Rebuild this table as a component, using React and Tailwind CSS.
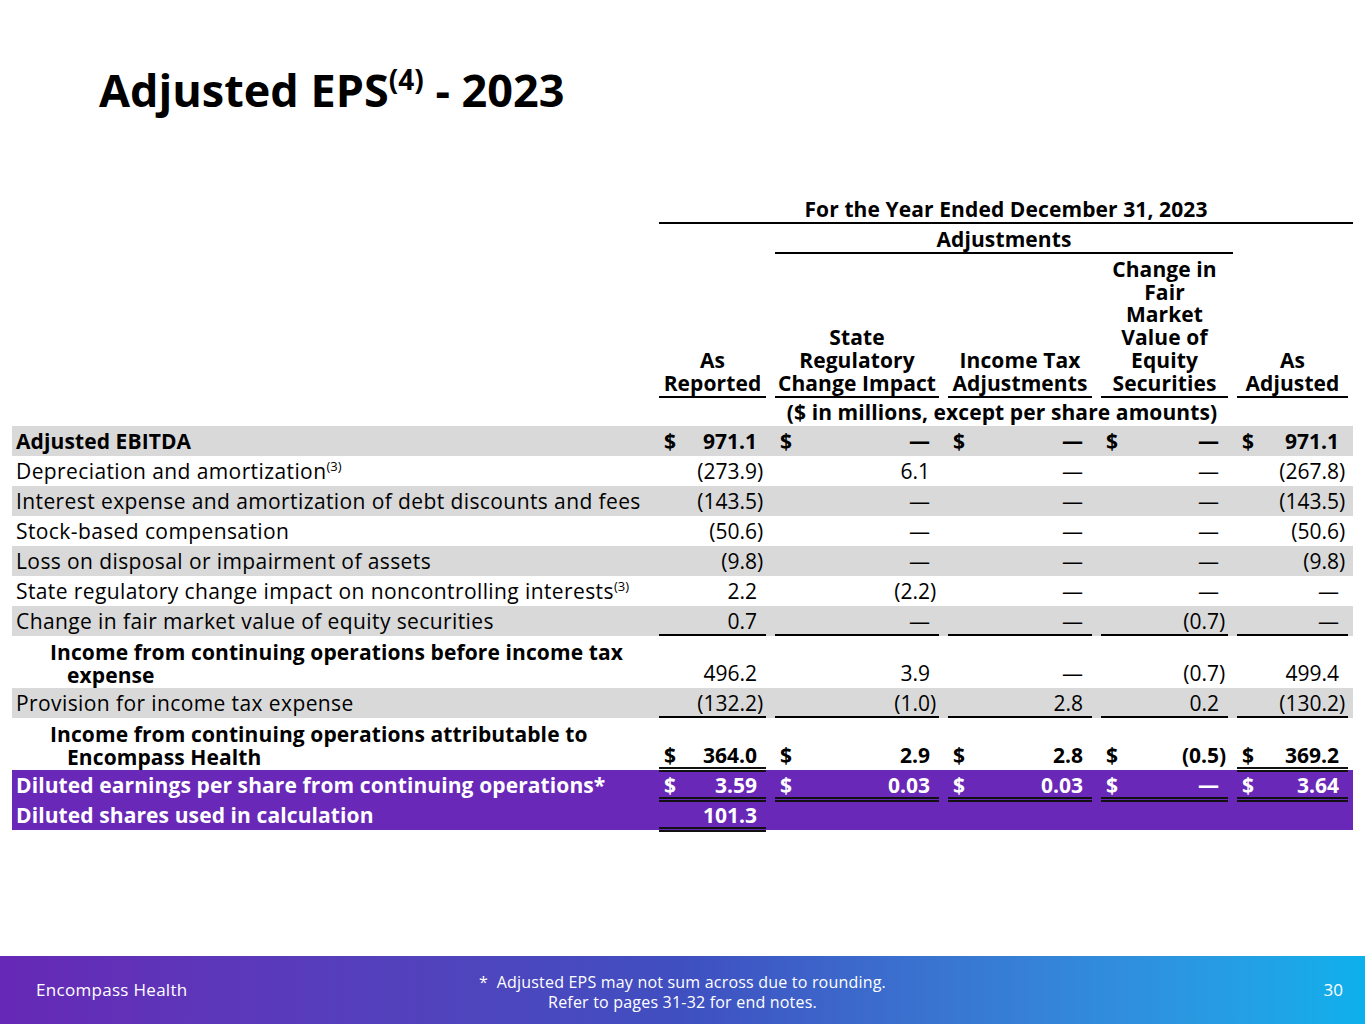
import React from 'react';

const FONT = "font-['Open_Sans','Noto_Sans',sans-serif]";
const GRID = 'grid w-[1341px] grid-cols-[643px_116px_173px_153px_136px_120px]';

// underline bars drawn under the figure cells
const LINES = {
  single: 'bottom-0 h-[2px] bg-black',
  double: 'bottom-[-2px] h-[5px] border-y-2 border-[#111]',
};

const rows = [
  { label: 'Adjusted EBITDA', bold: true, bg: 'gray', cells: ['$ 971.1', '$ —', '$ —', '$ —', '$ 971.1'] },
  { label: 'Depreciation and amortization', sup: '(3)', cells: ['(273.9)', '6.1', '—', '—', '(267.8)'] },
  { label: 'Interest expense and amortization of debt discounts and fees', bg: 'gray', cells: ['(143.5)', '—', '—', '—', '(143.5)'] },
  { label: 'Stock-based compensation', cells: ['(50.6)', '—', '—', '—', '(50.6)'] },
  { label: 'Loss on disposal or impairment of assets', bg: 'gray', cells: ['(9.8)', '—', '—', '—', '(9.8)'] },
  { label: 'State regulatory change impact on noncontrolling interests', sup: '(3)', cells: ['2.2', '(2.2)', '—', '—', '—'] },
  { label: 'Change in fair market value of equity securities', bg: 'gray', cells: ['0.7', '—', '—', '(0.7)', '—'], lines: ['single', 'single', 'single', 'single', 'single'] },
  { label: ['Income from continuing operations before income tax', 'expense'], cells: ['496.2', '3.9', '—', '(0.7)', '499.4'] },
  { label: 'Provision for income tax expense', bg: 'gray', cells: ['(132.2)', '(1.0)', '2.8', '0.2', '(130.2)'], lines: ['single', 'single', 'single', 'single', 'single'] },
  { label: ['Income from continuing operations attributable to', 'Encompass Health'], boldVals: true, cells: ['$ 364.0', '$ 2.9', '$ 2.8', '$ (0.5)', '$ 369.2'], lines: ['double', 'none', 'none', 'none', 'double'] },
  { label: 'Diluted earnings per share from continuing operations*', bold: true, bg: 'purple', cells: ['$ 3.59', '$ 0.03', '$ 0.03', '$ —', '$ 3.64'], lines: ['double', 'double', 'double', 'double', 'double'] },
  { label: 'Diluted shares used in calculation', bold: true, bg: 'purple', cells: ['101.3', '', '', '', ''], lines: ['double', 'none', 'none', 'none', 'none'] },
];

const BG = { gray: 'bg-[#d9d9d9] text-black', purple: 'bg-[#6a28b8] text-white', white: 'bg-white text-black' };

function Cell({ text, line = 'none' }) {
  let dollar = '';
  let v = text;
  if (v.startsWith('$')) {
    dollar = '$';
    v = v.slice(1).trim();
  }
  const paren = v.endsWith(')');
  if (paren) v = v.slice(0, -1);
  return (
    <div className="relative h-[30px] flex items-center justify-between pl-[9px] pr-[5px] leading-[30px]">
      <span>{dollar}</span>
      <span className="flex">
        <span>{v}</span>
        <span className="w-[9px]">{paren ? ')' : ''}</span>
      </span>
      {line !== 'none' && <div className={`absolute left-[4px] right-[5px] ${LINES[line]}`} />}
    </div>
  );
}

function Row({ r }) {
  const two = Array.isArray(r.label);
  const bold = r.bold || r.boldVals;
  return (
    <div className={`${GRID} ${BG[r.bg || 'white']} ${two ? 'h-[52px]' : 'h-[30px]'}`}>
      {two ? (
        <div className="pl-[55px] indent-[-17px] font-bold tracking-[0.1px] pt-[5px] leading-[23px]">
          {r.label[0]}
          <br />
          {r.label[1]}
        </div>
      ) : (
        <div className={`pl-[4px] flex items-center whitespace-nowrap leading-[30px] ${r.bold ? 'font-bold tracking-[0.1px]' : 'tracking-[0.4px]'}`}>
          <span>
            {r.label}
            {r.sup && <sup className="text-[13px] top-[-0.65em] tracking-normal">{r.sup}</sup>}
          </span>
        </div>
      )}
      {r.cells.map((c, i) => (
        <div key={i} className={`flex flex-col justify-end ${bold ? 'font-bold' : ''}`}>
          <Cell text={c} line={r.lines ? r.lines[i] : 'none'} />
        </div>
      ))}
    </div>
  );
}

function Head({ children }) {
  return (
    <div className="pl-[4px] pr-[5px] flex flex-col justify-end">
      <div className="text-center leading-[22.7px] border-b-2 border-black pb-[2px]">{children}</div>
    </div>
  );
}

export default function App() {
  return (
    <div className={`w-[1365px] h-[1024px] bg-white flex flex-col ${FONT} text-[21px] text-black`}>
      <h1 className="pl-[99px] pt-[64px] text-[45px] font-bold leading-[52px]">
        Adjusted EPS<sup className="text-[28px] top-[-0.62em]">(4)</sup> - 2023
      </h1>

      <div className="mt-[80px] pl-[12px]">
        {/* header */}
        <div className={`${GRID} font-bold tracking-[0.1px]`}>
          <div className="col-start-2 col-span-5 pl-[4px]">
            <div className="text-center border-b-2 border-black leading-[26px]">For the Year Ended December 31, 2023</div>
          </div>
          <div className="col-start-3 col-span-3 pl-[4px] pt-[2px]">
            <div className="text-center border-b-2 border-black leading-[26px]">Adjustments</div>
          </div>
          <div className="row-start-3 col-start-2 flex flex-col justify-end">
            <Head>As<br />Reported</Head>
          </div>
          <div className="row-start-3 col-start-3 flex flex-col justify-end">
            <Head>State<br />Regulatory<br />Change Impact</Head>
          </div>
          <div className="row-start-3 col-start-4 flex flex-col justify-end">
            <Head>Income Tax<br />Adjustments</Head>
          </div>
          <div className="row-start-3 col-start-5 flex flex-col justify-end pt-[4px]">
            <Head>Change in<br />Fair<br />Market<br />Value of<br />Equity<br />Securities</Head>
          </div>
          <div className="row-start-3 col-start-6 flex flex-col justify-end">
            <Head>As<br />Adjusted</Head>
          </div>
          <div className="row-start-4 col-start-2 col-span-5 text-center leading-[28px] pr-[4px]">
            ($ in millions, except per share amounts)
          </div>
        </div>

        {rows.map((r, i) => (
          <Row key={i} r={r} />
        ))}
      </div>

      <div className="mt-auto h-[68px] bg-gradient-to-r from-[#6628b6] via-[#3f4fc0] to-[#0bb0ec] text-white flex items-center pl-[36px] pr-[22px] text-[17px]">
        <div className="w-[300px] tracking-[0.3px]">Encompass Health</div>
        <div className="flex-1 text-center text-[16px] leading-[20px] pr-[14px] pt-[3px] tracking-[0.2px]">
          * &nbsp;Adjusted EPS may not sum across due to rounding.
          <br />
          Refer to pages 31-32 for end notes.
        </div>
        <div className="w-[300px] text-right">30</div>
      </div>
    </div>
  );
}
